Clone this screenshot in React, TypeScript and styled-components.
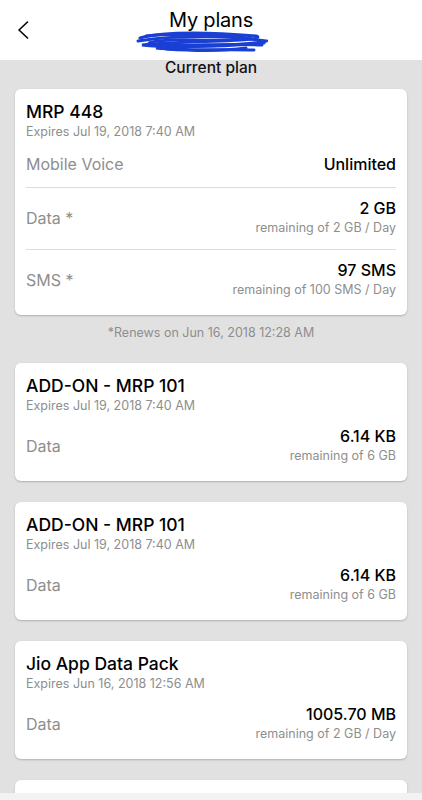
import React from "react";
import styled, { createGlobalStyle } from "styled-components";

const Global = createGlobalStyle`
  html, body { margin: 0; padding: 0; background: #e1e1e1; }
  body { font-family: Inter, "Liberation Sans", sans-serif; -webkit-font-smoothing: antialiased; }
  * { box-sizing: border-box; }
`;

const Page = styled.div`
  min-height: 800px;
  background: #e1e1e1;
  padding-bottom: 20px;
`;

const Header = styled.header`
  height: 60px;
  background: #fff;
  display: grid;
  grid-template-columns: 1fr auto 1fr;
  align-items: start;
`;

const BackButton = styled.button`
  justify-self: start;
  margin: 21px 0 0 17px;
  padding: 0;
  border: 0;
  background: none;
  width: 12px;
  height: 18px;
  display: flex;
`;

const TitleBlock = styled.div`
  display: flex;
  flex-direction: column;
  align-items: center;
  padding-top: 7px;
`;

const Title = styled.h1`
  margin: 0;
  font-size: 20px;
  line-height: 26px;
  font-weight: 400;
  color: #000;
  letter-spacing: -0.2px;
`;

const Scribble = styled.svg`
  width: 132px;
  height: 24px;
  margin-top: -4px;
  margin-right: 18px;
`;

const SectionTitle = styled.div`
  text-align: center;
  font-size: 15.5px;
  font-weight: 500;
  color: #111;
  line-height: 16px;
  padding-top: 0;
  margin-bottom: 13px;
`;

const List = styled.div`
  padding: 0 15px;
  display: flex;
  flex-direction: column;
`;

const Card = styled.section<{ $gap?: number }>`
  background: #fff;
  border-radius: 6px;
  box-shadow: 0 1px 2px rgba(0, 0, 0, 0.22);
  padding: 12px 11px 4px;
  margin-bottom: ${(p) => (p.$gap ?? 21)}px;
`;

const CardTitle = styled.div`
  font-size: 17.5px;
  font-weight: 500;
  color: #000;
  line-height: 22px;
`;

const Expires = styled.div`
  font-size: 12.5px;
  color: #8e8e8e;
  line-height: 18px;
  margin-bottom: 1px;
`;

const Row = styled.div<{ $single?: boolean }>`
  display: flex;
  justify-content: space-between;
  align-items: center;
  padding: ${(p) => (p.$single ? "11px 0 12px" : "10px 0 11px")};
  & + & {
    border-top: 1px solid #dcdcdc;
  }
`;

const Label = styled.div`
  font-size: 16px;
  color: #8e8e8e;
  line-height: 22px;
`;

const ValueCol = styled.div`
  display: flex;
  flex-direction: column;
  align-items: flex-end;
`;

const Value = styled.div`
  font-size: 16px;
  font-weight: 500;
  color: #000;
  line-height: 20px;
`;

const Sub = styled.div`
  font-size: 12.5px;
  color: #8e8e8e;
  line-height: 20px;
`;

const Renews = styled.div`
  text-align: center;
  font-size: 12.5px;
  color: #8e8e8e;
  line-height: 16px;
  margin: 10px 0 22px;
`;

const BottomStrip = styled.div`
  position: fixed;
  left: 0;
  right: 0;
  bottom: 0;
  height: 7px;
  background: #f2f2f2;
`;

type RowData = { label: string; value: string; sub?: string };
type Plan = { title: string; expires: string; rows: RowData[] };

const current: Plan = {
  title: "MRP 448",
  expires: "Expires Jul 19, 2018 7:40 AM",
  rows: [
    { label: "Mobile Voice", value: "Unlimited" },
    { label: "Data *", value: "2 GB", sub: "remaining of 2 GB / Day" },
    { label: "SMS *", value: "97 SMS", sub: "remaining of 100 SMS / Day" },
  ],
};

const others: Plan[] = [
  {
    title: "ADD-ON - MRP 101",
    expires: "Expires Jul 19, 2018 7:40 AM",
    rows: [{ label: "Data", value: "6.14 KB", sub: "remaining of 6 GB" }],
  },
  {
    title: "ADD-ON - MRP 101",
    expires: "Expires Jul 19, 2018 7:40 AM",
    rows: [{ label: "Data", value: "6.14 KB", sub: "remaining of 6 GB" }],
  },
  {
    title: "Jio App Data Pack",
    expires: "Expires Jun 16, 2018 12:56 AM",
    rows: [{ label: "Data", value: "1005.70 MB", sub: "remaining of 2 GB / Day" }],
  },
  {
    title: "Jio App Data Pack",
    expires: "Expires Jun 16, 2018 12:56 AM",
    rows: [{ label: "Data", value: "2 GB", sub: "remaining of 2 GB / Day" }],
  },
];

function PlanCard({ plan, gap }: { plan: Plan; gap?: number }) {
  return (
    <Card $gap={gap}>
      <CardTitle>{plan.title}</CardTitle>
      <Expires>{plan.expires}</Expires>
      {plan.rows.map((r, i) => (
        <Row key={i} $single={!r.sub}>
          <Label>{r.label}</Label>
          <ValueCol>
            <Value>{r.value}</Value>
            {r.sub && <Sub>{r.sub}</Sub>}
          </ValueCol>
        </Row>
      ))}
    </Card>
  );
}

export default function App() {
  return (
    <Page>
      <Global />
      <Header>
        <BackButton aria-label="Back">
          <svg width="12" height="18" viewBox="0 0 12 18">
            <path d="M10.5 1 L2 9 L10.5 17" fill="none" stroke="#000" strokeWidth="1.6" strokeLinecap="round" strokeLinejoin="round" />
          </svg>
        </BackButton>
        <TitleBlock>
          <Title>My plans</Title>
          <Scribble viewBox="0 0 132 24">
            <g fill="none" stroke="#1a3fd4" strokeLinecap="round" strokeWidth="3">
              <path d="M4 9 C30 2, 70 3, 120 7 C128 9, 110 12, 60 11 C30 10, 8 13, 14 15 C40 18, 90 14, 126 16" />
              <path d="M2 12 C40 6, 90 6, 130 12 C120 16, 60 17, 20 19 C50 22, 100 20, 118 21" />
              <path d="M10 7 C40 4, 100 6, 116 10 C90 13, 40 12, 6 16 C30 19, 80 18, 128 14" />
              <path d="M30 20 C60 22, 90 22, 110 19" />
            </g>
          </Scribble>
        </TitleBlock>
      </Header>
      <SectionTitle>Current plan</SectionTitle>
      <List>
        <PlanCard plan={current} gap={0} />
        <Renews>*Renews on Jun 16, 2018 12:28 AM</Renews>
        {others.map((p, i) => (
          <PlanCard key={i} plan={p} />
        ))}
      </List>
      <BottomStrip />
    </Page>
  );
}
